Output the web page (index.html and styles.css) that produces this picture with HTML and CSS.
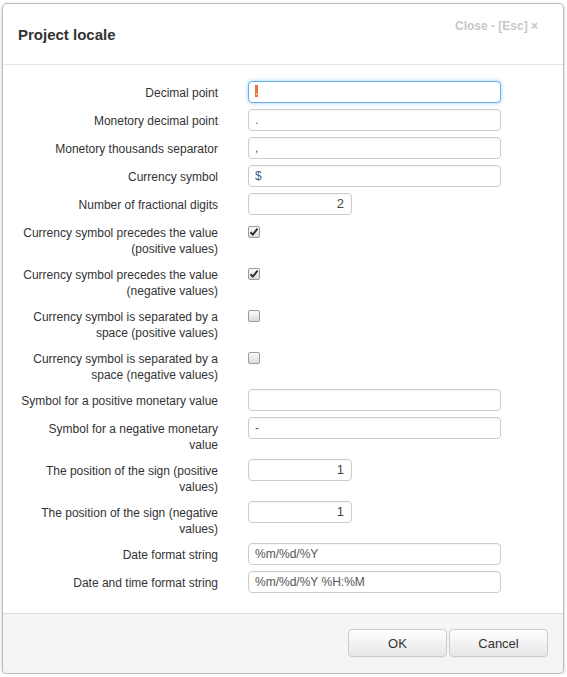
FILE: index.html
```html
<!DOCTYPE html>
<html>
<head>
<meta charset="utf-8">
<link rel="stylesheet" href="styles.css">
</head>
<body>
<div class="dialog">
  <div class="header">
    <div class="title">Project locale</div>
    <div class="close">Close - [Esc] ×</div>
  </div>
  <div class="body">
    <div class="form">
      <div class="label">Decimal point</div>
      <div class="field"><div class="input focus"><span class="sel">.</span></div></div>

      <div class="label">Monetory decimal point</div>
      <div class="field"><div class="input sym">.</div></div>

      <div class="label">Monetory thousands separator</div>
      <div class="field"><div class="input sym">,</div></div>

      <div class="label">Currency symbol</div>
      <div class="field"><div class="input sym">$</div></div>

      <div class="label">Number of fractional digits</div>
      <div class="field"><div class="input short num">2</div></div>

      <div class="label">Currency symbol precedes the value (positive values)</div>
      <div class="field"><span class="cb checked"><svg viewBox="0 0 12 12" width="12" height="12"><path d="M2.5 6.2 L4.8 8.6 L9.6 2.6" fill="none" stroke="#333" stroke-width="2"/></svg></span></div>

      <div class="label">Currency symbol precedes the value (negative values)</div>
      <div class="field"><span class="cb checked"><svg viewBox="0 0 12 12" width="12" height="12"><path d="M2.5 6.2 L4.8 8.6 L9.6 2.6" fill="none" stroke="#333" stroke-width="2"/></svg></span></div>

      <div class="label">Currency symbol is separated by a space (positive values)</div>
      <div class="field"><span class="cb"></span></div>

      <div class="label">Currency symbol is separated by a space (negative values)</div>
      <div class="field"><span class="cb"></span></div>

      <div class="label">Symbol for a positive monetary value</div>
      <div class="field"><div class="input"></div></div>

      <div class="label">Symbol for a negative monetary value</div>
      <div class="field"><div class="input">-</div></div>

      <div class="label">The position of the sign (positive values)</div>
      <div class="field"><div class="input short num">1</div></div>

      <div class="label">The position of the sign (negative values)</div>
      <div class="field"><div class="input short num">1</div></div>

      <div class="label">Date format string</div>
      <div class="field"><div class="input">%m/%d/%Y</div></div>

      <div class="label">Date and time format string</div>
      <div class="field"><div class="input">%m/%d/%Y %H:%M</div></div>
    </div>
  </div>
  <div class="footer">
    <button class="btn">OK</button>
    <button class="btn">Cancel</button>
  </div>
</div>
</body>
</html>
```

FILE: styles.css
```css
html, body {
  margin: 0;
  padding: 0;
  background: #fff;
}
body {
  font-family: "Liberation Sans", Arial, sans-serif;
  font-size: 12px;
  color: #333;
}
.dialog {
  width: 560px;
  margin: 3px 0 0 2px;
  border: 1px solid #bdbdbd;
  border-radius: 5px;
  box-shadow: 0 1px 3px rgba(0,0,0,0.25);
  overflow: hidden;
  background: #fff;
}
.header {
  height: 60px;
  border-bottom: 1px solid #e5e5e5;
  display: flex;
  justify-content: space-between;
  align-items: flex-start;
  padding: 0 25px 0 15px;
}
.title {
  margin-top: 22px;
  font-size: 15px;
  line-height: 18px;
  font-weight: bold;
  color: #333;
}
.close {
  margin-top: 15px;
  font-size: 12px;
  line-height: 14px;
  font-weight: bold;
  color: #c8c8c8;
}
.body {
  padding: 16px 0 20px 0;
}
.form {
  display: grid;
  grid-template-columns: 215px 253px;
  column-gap: 30px;
  row-gap: 6px;
}
.label {
  text-align: right;
  padding: 4px 0 0 17px;
  line-height: 16px;
  min-height: 18px;
}
.field {
  display: flex;
  align-items: flex-start;
}
.input {
  box-sizing: border-box;
  width: 253px;
  height: 22px;
  border: 1px solid #ccc;
  border-radius: 4px;
  padding: 0 6px;
  line-height: 20px;
  font-size: 12px;
  color: #555;
  background: #fff;
  box-shadow: inset 0 1px 1px rgba(0,0,0,0.04);
  white-space: pre;
}
.input.sym {
  color: #3d5f86;
}
.input.focus {
  border-color: #66afe9;
  box-shadow: 0 0 4px rgba(102,175,233,0.6);
}
.sel {
  background: #e8743b;
  color: #fff;
  display: inline-block;
  line-height: 12px;
  width: 3px;
  height: 12px;
  vertical-align: -1px;
  overflow: hidden;
}
.input.short {
  width: 104px;
}
.input.num {
  text-align: right;
  padding-right: 7px;
  font-size: 13px;
  color: #444;
}
.cb {
  box-sizing: border-box;
  display: block;
  width: 12px;
  height: 12px;
  margin-top: 5px;
  border: 1px solid #9a9a9a;
  border-radius: 2px;
  background: linear-gradient(#fbfbfb, #dcdcdc);
  position: relative;
}
.cb svg {
  position: absolute;
  left: -1px;
  top: -1px;
}
.footer {
  border-top: 1px solid #ddd;
  background: #f5f5f5;
  padding: 15px 15px 16px 0;
  display: flex;
  justify-content: flex-end;
  gap: 2px;
}
.btn {
  box-sizing: border-box;
  height: 28px;
  width: 99px;
  border: 1px solid #ccc;
  border-radius: 4px;
  background: linear-gradient(#ffffff, #e6e6e6);
  font-family: "Liberation Sans", Arial, sans-serif;
  font-size: 13px;
  color: #333;
  padding: 0;
  box-shadow: 0 1px 1px rgba(0,0,0,0.05);
}
```
